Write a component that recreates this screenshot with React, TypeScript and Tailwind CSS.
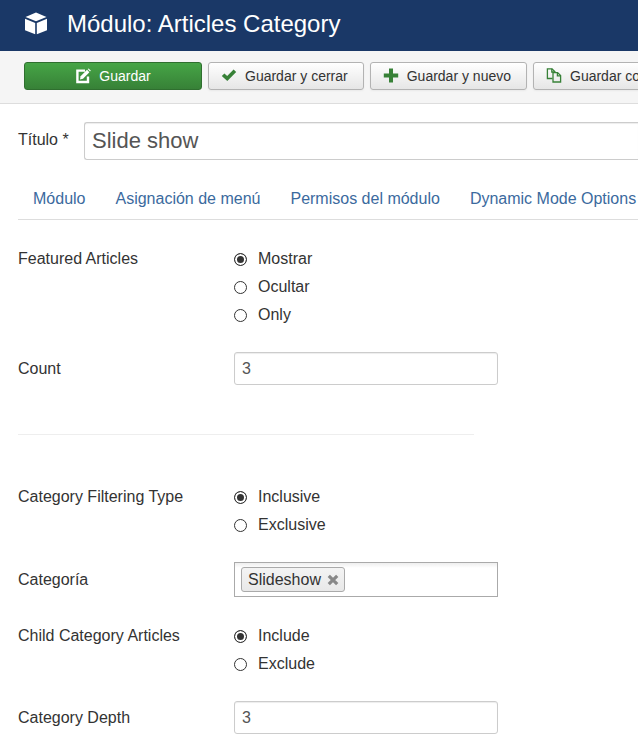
import { useState, type ReactNode } from 'react'

interface RadioGroupProps {
  name: string
  label: string
  options: string[]
}

interface TextFieldProps {
  id: string
  label: string
  initial: string
}

const tabs = ['Módulo', 'Asignación de menú', 'Permisos del módulo', 'Dynamic Mode Options']

function CubeIcon() {
  return (
    <svg viewBox="0 0 24 24" className="w-6 h-6" fill="#fff" aria-hidden="true">
      <path d="M12 0.5 L22.5 4.9 L12 9.2 L1.5 4.9 Z" />
      <path d="M1 6.8 L11.2 11 V22.3 L1 18.2 Z" />
      <path d="M23 6.8 L12.8 11 V22.3 L23 18.2 Z" />
    </svg>
  )
}

function EditIcon() {
  return (
    <svg viewBox="0 0 16 16" className="w-4 h-4" aria-hidden="true">
      <path d="M10 2.6 H2.4 V14 H13 V8.5" fill="none" stroke="#fff" strokeWidth="2.4" />
      <path d="M5 11.4 L5.6 8.2 L12 1.8 L14.4 4.2 L8 10.7 Z" fill="#fff" />
      <path d="M12.7 1.1 L13.5 0.4 L15.8 2.6 L15 3.5 Z" fill="#fff" />
    </svg>
  )
}

function CheckIcon() {
  return (
    <svg viewBox="0 0 16 16" className="w-4 h-4" fill="#378137" aria-hidden="true">
      <path d="M0.8 8 L3.4 5.4 L6.2 8 L12.6 1.6 L15.2 4 L6.3 13 Z" />
    </svg>
  )
}

function PlusIcon() {
  return (
    <svg viewBox="0 0 16 16" className="w-4 h-4" fill="#378137" aria-hidden="true">
      <path d="M6 0.4 H10 V5.4 H15.2 V9.4 H10 V14.4 H6 V9.4 H0.8 V5.4 H6 Z" />
    </svg>
  )
}

function CopyIcon() {
  return (
    <svg viewBox="0 0 16 16" className="w-4 h-4" fill="none" stroke="#378137" strokeWidth="1.3" aria-hidden="true">
      <path d="M6.5 10.5 H1.4 V0.8 H6 L9 3.8 V4.6" />
      <path d="M5.8 0.8 V4 H9" />
      <path d="M7 4.6 H11.6 L14.6 7.6 V14 H7 Z" />
      <path d="M11.4 4.6 V7.8 H14.6" />
    </svg>
  )
}

function ToolbarButton({ icon, children }: { icon: ReactNode; children: ReactNode }) {
  return (
    <button
      type="button"
      className="flex shrink-0 items-center gap-2 h-7 pl-3 pr-[15px] rounded-[3px] border border-[#b3b3b3] bg-linear-to-b from-white to-[#e6e6e6] text-sm text-[#333] whitespace-nowrap shadow-xs"
    >
      {icon}
      {children}
    </button>
  )
}

function RadioGroup({ name, label, options }: RadioGroupProps) {
  const [selected, setSelected] = useState(options[0])

  return (
    <fieldset className="flex">
      <legend className="float-left w-[216px] shrink-0 pt-px leading-7">{label}</legend>
      <div className="flex flex-col">
        {options.map((option) => (
          <label key={option} className="flex items-center h-7 pt-0.5">
            <input
              type="radio"
              name={name}
              value={option}
              checked={selected === option}
              onChange={() => setSelected(option)}
              className="appearance-none mr-[11px] w-[13px] h-[13px] rounded-full border border-[#333] bg-white checked:bg-[#333] checked:shadow-[inset_0_0_0_2px_#fff]"
            />
            {option}
          </label>
        ))}
      </div>
    </fieldset>
  )
}

function TextField({ id, label, initial }: TextFieldProps) {
  return (
    <div className="flex items-center">
      <label htmlFor={id} className="w-[216px] shrink-0">
        {label}
      </label>
      <input
        id={id}
        type="text"
        defaultValue={initial}
        className="w-[264px] h-[33px] px-[7px] rounded-[3px] border border-[#ccc] text-[#555] shadow-[inset_0_1px_1px_rgba(0,0,0,0.075)]"
      />
    </div>
  )
}

function CategoryField() {
  const [categories, setCategories] = useState(['Slideshow'])

  return (
    <div className="flex items-center">
      <label htmlFor="category" className="w-[216px] shrink-0">
        Categoría
      </label>
      <div className="flex items-center w-[264px] h-[35px] px-1.5 border border-[#aaa] bg-linear-to-b from-[#eee] to-white to-15%">
        {categories.map((category) => (
          <span
            key={category}
            className="flex shrink-0 items-center gap-1.5 h-[25px] pl-1.5 pr-[5px] rounded-[3px] border border-[#aaa] bg-linear-to-b from-[#f4f4f4] to-[#e8e8e8]"
          >
            {category}
            <button
              type="button"
              aria-label={`Quitar ${category}`}
              onClick={() => setCategories(categories.filter((c) => c !== category))}
            >
              <svg viewBox="0 0 12 12" className="w-3 h-3" stroke="#888" strokeWidth="3.2" aria-hidden="true">
                <path d="M1.8 1.8 L10.2 10.2 M10.2 1.8 L1.8 10.2" />
              </svg>
            </button>
          </span>
        ))}
        <input id="category" type="text" className="flex-1 min-w-0 h-full bg-transparent outline-none" />
      </div>
    </div>
  )
}

export default function App() {
  return (
    <div className="overflow-x-hidden bg-white font-['Liberation_Sans',Arial,sans-serif] text-base text-[#333]">
      {/* Header */}
      <header className="flex items-center gap-[19px] h-[51px] px-6 pb-1 bg-[#1a3867]">
        <CubeIcon />
        <h1 className="text-2xl text-white whitespace-nowrap">Módulo: Articles Category</h1>
      </header>

      {/* Toolbar */}
      <div className="flex gap-1.5 pl-6 pt-[11px] pb-[13px] overflow-hidden border-b border-[#ddd] bg-[#f5f5f5]">
        <button
          type="button"
          className="flex shrink-0 items-center justify-center gap-2 w-[178px] h-7 rounded-[3px] border border-[#2f6f2f] bg-linear-to-b from-[#46a546] to-[#378137] text-sm text-white"
        >
          <EditIcon />
          Guardar
        </button>
        <ToolbarButton icon={<CheckIcon />}>Guardar y cerrar</ToolbarButton>
        <ToolbarButton icon={<PlusIcon />}>Guardar y nuevo</ToolbarButton>
        <ToolbarButton icon={<CopyIcon />}>Guardar como copia</ToolbarButton>
      </div>

      <main className="pl-[18px] pt-[18px] pb-3.5">
        {/* Title */}
        <div className="flex">
          <label htmlFor="title" className="w-[66px] shrink-0 pt-1.5">
            Título *
          </label>
          <input
            id="title"
            type="text"
            defaultValue="Slide show"
            className="flex-1 min-w-0 h-[38px] px-[7px] rounded-l-[3px] border border-r-0 border-[#ccc] text-[22px] text-[#555] shadow-[inset_0_1px_1px_rgba(0,0,0,0.075)]"
          />
        </div>

        {/* Tabs */}
        <nav className="flex gap-[30px] mt-[27px] pl-[15px] pb-2 border-b border-[#ddd] whitespace-nowrap text-[#3b6a9e]">
          {tabs.map((tab) => (
            <a key={tab} href="#" className="hover:underline">
              {tab}
            </a>
          ))}
        </nav>

        {/* Fields */}
        <form className="flex flex-col gap-6 mt-6">
          <RadioGroup name="featured" label="Featured Articles" options={['Mostrar', 'Ocultar', 'Only']} />
          <TextField id="count" label="Count" initial="3" />
          <hr className="w-[456px] mt-[25px] mb-[23px] border-[#eee]" />
          <RadioGroup name="filtering" label="Category Filtering Type" options={['Inclusive', 'Exclusive']} />
          <CategoryField />
          <RadioGroup name="child" label="Child Category Articles" options={['Include', 'Exclude']} />
          <TextField id="depth" label="Category Depth" initial="3" />
        </form>
      </main>
    </div>
  )
}
